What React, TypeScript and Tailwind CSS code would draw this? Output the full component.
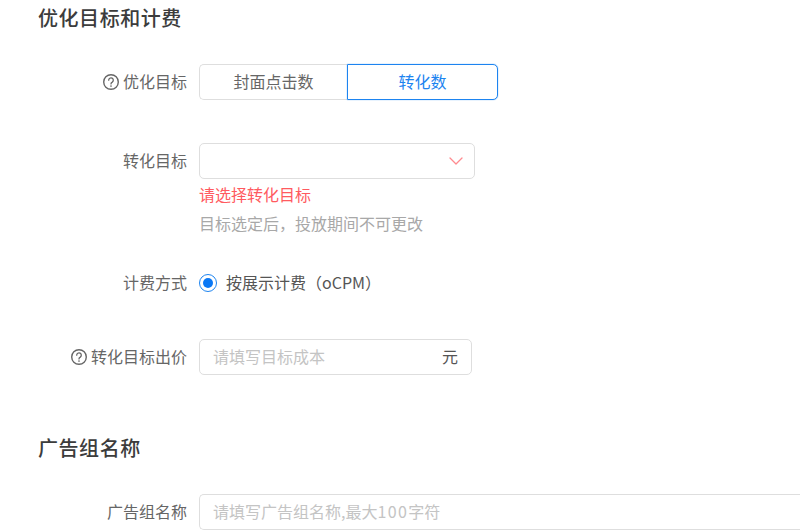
import { ChevronDown } from 'lucide-react';

const font = { fontFamily: '"Noto Sans CJK SC", "Liberation Sans", sans-serif' };

function HelpIcon() {
  return (
    <svg width="18" height="18" viewBox="0 0 18 18" fill="none" className="mr-[3px] mt-[2px] shrink-0">
      <circle cx="9" cy="9" r="7.3" stroke="#666" strokeWidth="1.4" />
      <path d="M6.7 7.2a2.3 2.3 0 1 1 3.6 1.9c-.8.5-1.3 1-1.3 1.8" stroke="#666" strokeWidth="1.3" strokeLinecap="round" />
      <circle cx="9" cy="13" r="0.85" fill="#666" />
    </svg>
  );
}

function Label({ text, help }: { text: string; help?: boolean }) {
  return (
    <div className="w-[187px] shrink-0 h-9 pb-[2px] flex items-center justify-end text-[16px] text-[#666]">
      {help && <HelpIcon />}
      <span>{text}</span>
    </div>
  );
}

export default function App() {
  return (
    <div className="w-[800px] h-[532px] overflow-hidden bg-white" style={font}>
      {/* 优化目标和计费 */}
      <h2 className="pl-[38px] pt-[4px] h-[64px] text-[20px] leading-[28px] tracking-[0.55px] font-medium text-[#3c3c3c]">优化目标和计费</h2>

      <div className="flex">
        <Label text="优化目标" help />
        <div className="ml-3 flex h-9 text-[16px]">
          <button className="w-[148px] pb-[2px] border border-r-0 border-[#dedede] rounded-l-[5px] text-[#666]">封面点击数</button>
          <button className="w-[151px] pb-[2px] border border-[#1d84f0] rounded-r-[5px] text-[#1d84f0] shadow-[0_0_1px_#1d84f0]">转化数</button>
        </div>
      </div>

      <div className="flex mt-[43px]">
        <Label text="转化目标" />
        <div className="ml-3">
          <div className="w-[276px] h-9 border border-[#dedede] rounded-[5px] flex items-center justify-end pr-[6px]">
            <ChevronDown className="w-[24px] h-[24px] text-[#ff8a8f]" strokeWidth={1.3} />
          </div>
          <div className="mt-[3px] text-[16px] leading-[24px] text-[#ff5a60]">请选择转化目标</div>
          <div className="mt-[5px] text-[16px] leading-[24px] text-[#a8a8a8]">目标选定后，投放期间不可更改</div>
        </div>
      </div>

      <div className="flex mt-[30px]">
        <Label text="计费方式" />
        <div className="ml-3 flex items-center h-9 text-[16px] text-[#555]">
          <span className="w-[18px] h-[18px] rounded-full border border-[#1d84f0] flex items-center justify-center">
            <span className="w-[10px] h-[10px] rounded-full bg-[#0a78f5]" />
          </span>
          <span className="ml-[9px] pb-[2px]">按展示计费（oCPM）</span>
        </div>
      </div>

      <div className="flex mt-[38px]">
        <Label text="转化目标出价" help />
        <div className="ml-3 w-[273px] h-9 pb-[2px] border border-[#dedede] rounded-[5px] flex items-center justify-between pl-[13px] pr-[13px] text-[16px]">
          <span className="text-[#c4c4c4]">请填写目标成本</span>
          <span className="text-[#555]">元</span>
        </div>
      </div>

      <h2 className="pl-[38px] mt-[59px] h-[60px] text-[20px] leading-[28px] tracking-[0.55px] font-medium text-[#3c3c3c]">广告组名称</h2>

      <div className="flex">
        <Label text="广告组名称" />
        <div className="ml-3 flex-1 h-9 pb-[2px] border border-r-0 border-[#dedede] rounded-l-[5px] flex items-center pl-[13px] text-[16px] text-[#c4c4c4]">
          <span>请填写广告组名称,最大<span className="tracking-[1.4px]">100</span>字符</span>
        </div>
      </div>
    </div>
  );
}
